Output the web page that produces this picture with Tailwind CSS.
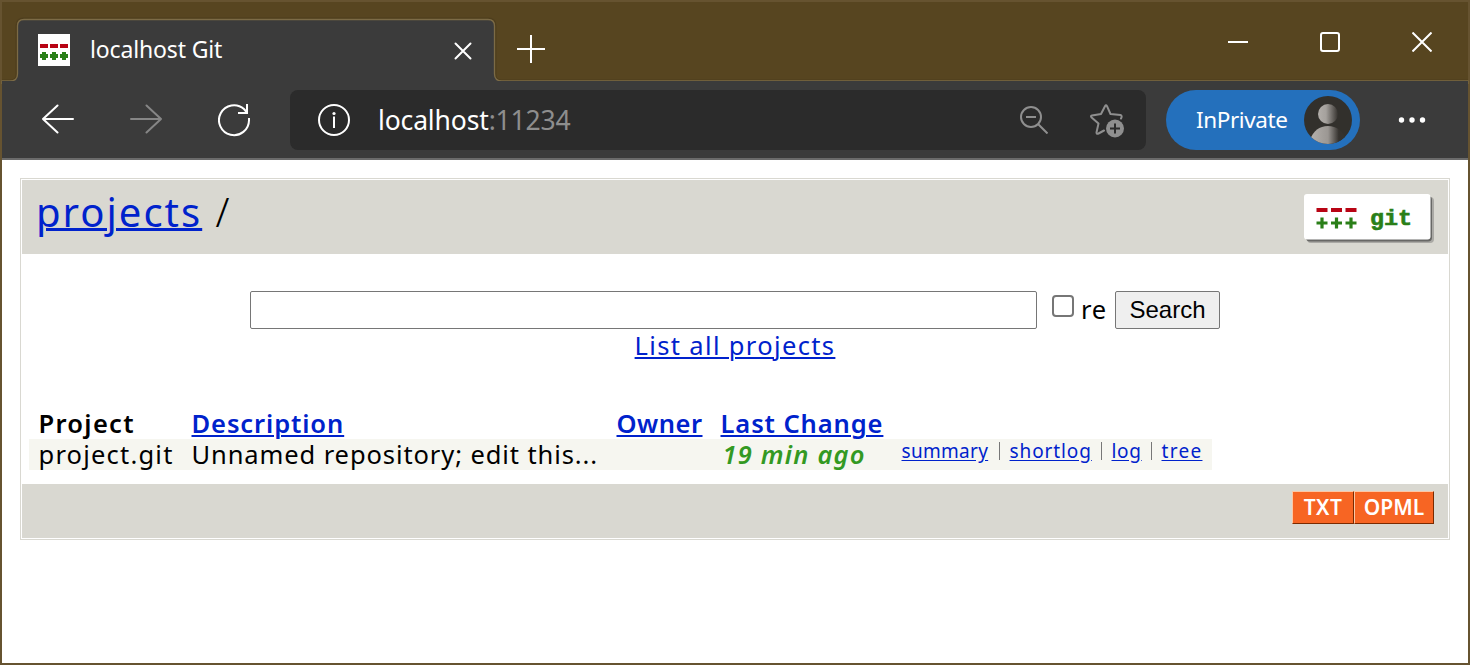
<!DOCTYPE html>
<html lang="en">
<head>
<meta charset="utf-8">
<title>localhost Git</title>
<script src="https://cdn.jsdelivr.net/npm/@tailwindcss/browser@4"></script>
</head>
<body class="w-[1470px] h-[665px] overflow-hidden bg-white font-['Noto_Sans',sans-serif] text-black">
<div class="relative flex h-[665px] w-[1470px] flex-col border-2 border-[#665330] bg-white">

  <!-- Title bar -->
  <header class="relative flex h-[79px] shrink-0 bg-[#574520] text-white">
    <svg class="absolute -left-[2px] -top-[2px]" width="1470" height="84" fill="none">
      <path d="M2 81.500H10Q17.500 81.500 17.500 75V26Q17.500 19.500 24 19.500H488Q494.500 19.500 494.500 26V75Q494.500 81.500 502 81.500H1468" stroke="#45371a" stroke-width="4" opacity=".5"/>
      <path d="M2 81H10Q17.500 81 17.500 74V26Q17.500 19.500 24 19.500H488Q494.500 19.500 494.500 26V74Q494.500 81 502 81H1468V84H2Z" fill="#3b3b3b" stroke="#7c6b46" stroke-width="1.300"/>
    </svg>
    <div class="relative mt-[17px] flex h-[62px] w-[493px] items-center pl-[36px]">
      <svg width="32" height="32" shape-rendering="crispEdges">
        <path fill="#fff" d="M0 0h32v32H0z"/>
        <path fill="#b80414" d="M2 10h8v4H2zM12 10h8v4h-8zM22 10h8v4h-8z"/>
        <path fill="#2a7f18" d="M4 18h4v2h2v4H8v2H4v-2H2v-4h2zM14 18h4v2h2v4h-2v2h-4v-2h-2v-4h2zM24 18h4v2h2v4h-2v2h-4v-2h-2v-4h2z"/>
      </svg>
      <span class="-mt-[2px] ml-[20px] w-[364px] text-[23px] tracking-[-0.15px]">localhost Git</span>
      <svg class="mt-[2px] shrink-0" width="18" height="18" stroke="#fff" stroke-width="2" stroke-linecap="round"><path d="M1.500 1.500 16.500 16.500M16.500 1.500 1.500 16.500"/></svg>
    </div>
    <svg class="relative ml-[22px] mt-[33px]" width="28" height="28" stroke="#fff" stroke-width="2"><path d="M0 14H28M14 0V28"/></svg>
    <div class="ml-auto mr-[36px] mt-[30px] flex gap-[72px]">
      <svg width="20" height="20" stroke="#fff" stroke-width="2"><path d="M0 10H20"/></svg>
      <svg width="20" height="20" fill="none" stroke="#fff" stroke-width="2"><rect x="1" y="1" width="18" height="18" rx="2"/></svg>
      <svg width="20" height="20" stroke="#fff" stroke-width="2"><path d="M.5.5 19.500 19.500M19.500.5.5 19.500"/></svg>
    </div>
  </header>

  <!-- Toolbar -->
  <nav class="relative flex h-[79px] shrink-0 items-start border-b-2 border-[#6b6b6b] bg-[#3b3b3b] pt-[9px] text-white">
    <svg class="ml-[40px] mt-[14px]" width="32" height="30" fill="none" stroke="#fff" stroke-width="2" stroke-linecap="round" stroke-linejoin="round"><path d="M15.500 1.500 1 15 15.500 28.500M1 15H31"/></svg>
    <svg class="ml-[56px] mt-[14px]" width="32" height="30" fill="none" stroke="#868686" stroke-width="2" stroke-linecap="round" stroke-linejoin="round"><path d="M16.500 1.500 31 15 16.500 28.500M31 15H1"/></svg>
    <svg class="ml-[56px] mt-[14px]" width="32" height="33" fill="none" stroke="#fff" stroke-width="2"><path d="M31 14V16A15 15 0 1 1 26 5L29 8.500M29 0V9H20"/></svg>
    <div class="ml-[40px] flex h-[60px] w-[856px] items-center rounded-lg bg-[#2b2b2b] pl-[28px]">
      <svg width="32" height="32" fill="none" stroke="#fff" stroke-width="2"><circle cx="16" cy="16" r="15"/><path d="M16 12.500V24"/><circle cx="16" cy="9.500" r="1.600" fill="#fff" stroke="none"/></svg>
      <span class="mt-[1px] ml-[28px] w-[642px] text-[26.500px] tracking-[-0.15px]">localhost<span class="text-[#8e8e8e]">:11234</span></span>
      <svg width="28" height="28" fill="none" stroke="#8f8f8f" stroke-width="2"><circle cx="11" cy="11" r="10"/><path d="M6 11H16M18 18 27.500 27.500"/></svg>
      <svg class="ml-[42px] mt-[2px]" width="36" height="34" fill="none" stroke="#8f8f8f" stroke-width="2" stroke-linejoin="round" stroke-linecap="round">
        <path d="M31 14.500Q32.500 11.500 30.500 11L20.500 10 17 2.200Q16 .5 15 2.200L11 10 2 11.500Q.2 12 1.600 13.500L8.500 19.500 6.500 28.500Q6.500 30.500 8.500 29.500L14 26.500"/>
        <circle cx="25" cy="24.500" r="9" fill="#8f8f8f" stroke="none"/><path stroke-linecap="butt" d="M20 24.500H30M25 19.500V29.500" stroke="#2b2b2b"/>
      </svg>
    </div>
    <div class="ml-[20px] flex h-[60px] w-[194px] items-center rounded-full bg-[#2470bc] pl-[30px]">
      <span class="-mt-[1px] w-[108px] text-[22.500px] tracking-[-0.4px]">InPrivate</span>
      <svg width="48" height="48">
        <defs>
          <clipPath id="disc"><circle cx="24" cy="24" r="24"/></clipPath>
          <linearGradient id="shade"><stop stop-color="#b2aeaa"/><stop offset=".4" stop-color="#a5a19d"/><stop offset="1" stop-color="#35322e"/></linearGradient>
          <linearGradient id="body"><stop stop-color="#b5b1ad"/><stop offset=".5" stop-color="#9b9793"/><stop offset=".8" stop-color="#35322e"/></linearGradient>
        </defs>
        <circle cx="24" cy="24" r="24" fill="#32302c"/>
        <circle cx="24" cy="18" r="10" fill="url(#shade)"/>
        <path clip-path="url(#disc)" fill="url(#body)" d="M6 44Q11 30 24 30Q37 30 42 44V48H6Z"/>
      </svg>
    </div>
    <svg class="ml-[38px] mt-[27px]" width="28" height="6" fill="#fff"><circle cx="3.500" cy="3" r="2.700"/><circle cx="14" cy="3" r="2.700"/><circle cx="24.500" cy="3" r="2.700"/></svg>
  </nav>

  <!-- Gitweb page -->
  <main class="mx-[18px] mt-[18px] flex h-[362px] flex-col border border-[#d9d8d1] p-px">
    <div class="flex h-[74px] shrink-0 justify-between bg-[#d9d8d1] pl-[14px] pr-[14px]">
      <h1 class="mt-[2px] text-[40px] leading-[60px] tracking-[2px]"><a class="text-[#0022cc] underline decoration-[3px] underline-offset-[1px]">projects</a><span class="ml-[1px] font-light"> /</span></h1>
      <svg class="mt-[14px]" width="130" height="49">
        <rect x="3" y="3" width="127" height="46" rx="4" fill="#aaa9a5"/>
        <rect x="2" y="2" width="126" height="45.500" rx="4" fill="#686866"/>
        <rect width="126.500" height="45.500" rx="3" fill="#fff"/>
        <path fill="#b80414" d="M12.500 14h11v4h-11zM27 14h11v4H27zM41.500 14h11v4h-11z"/>
        <path stroke="#2a7f18" stroke-width="3.200" d="M12.500 29h11M18 23.500v11M27 29h11M32.500 23.500v11M41.500 29h11M47 23.500v11"/>
        <text x="66" y="31" fill="#2a7f18" stroke="#2a7f18" stroke-width=".6" font-weight="700" font-size="22" textLength="42" lengthAdjust="spacingAndGlyphs" style="font-family:'Liberation Mono'">git</text>
      </svg>
    </div>

    <div class="mt-[37px] flex h-[38px] items-start pl-[228px]">
      <div class="h-[38px] w-[787px] rounded-[2px] border border-[#767676] bg-white"></div>
      <div class="ml-[15px] mt-[4px] h-[22px] w-[22px] rounded-[4px] border-2 border-[#767676] bg-white"></div>
      <span class="-mt-[1px] ml-[7px] w-[34px] text-[25.500px] leading-[38px] tracking-[0.8px]">re</span>
      <div class="flex h-[38px] w-[105px] items-center justify-center rounded-[2px] border border-[#767676] bg-[#efefef] font-['Liberation_Sans',sans-serif] text-[24px]">Search</div>
    </div>
    <div class="-mt-px h-[34px] text-center text-[25.500px] leading-[34px] tracking-[1.35px]"><a class="text-[#0022cc] underline decoration-2 underline-offset-[2px]">List all projects</a></div>

    <div class="mt-[46px] flex h-[31px] text-[25.500px] leading-[30px] pl-[16.500px] font-semibold tracking-[1px] text-[#0022cc] whitespace-nowrap">
      <span class="w-[153px] tracking-[1.3px] text-black">Project</span>
      <span class="w-[425px]"><a class="tracking-[0.9px] underline decoration-2 underline-offset-[2px]">Description</a></span>
      <span class="w-[104px]"><a class="tracking-[0.5px] underline decoration-2 underline-offset-[2px]">Owner</a></span>
      <span><a class="tracking-[0.9px] underline decoration-2 underline-offset-[2px]">Last Change</a></span>
    </div>
    <div class="ml-[7px] flex h-[31px] w-[1183px] items-start bg-[#f6f6f0] pl-[9.500px] text-[25.500px] leading-[30px] tracking-[0.9px] whitespace-nowrap">
      <span class="w-[153px] tracking-[1.2px]">project.git</span>
      <span class="w-[531px]">Unnamed repository; edit this...</span>
      <span class="w-[179px] font-semibold italic tracking-[1.2px] text-[#339922]">19 min ago</span>
      <span class="flex text-[19px] leading-[25px] tracking-[0.5px] text-[#0022cc]">
        <a class="w-[88px] tracking-[0.3px] underline underline-offset-[2px]">summary</a>
        <span class="mt-[3px] h-[18px] w-[20px] pl-[9px]"><span class="block h-full w-px bg-[#777]"></span></span>
        <a class="w-[82px] tracking-[0.9px] underline underline-offset-[2px]">shortlog</a>
        <span class="mt-[3px] h-[18px] w-[20px] pl-[9px]"><span class="block h-full w-px bg-[#777]"></span></span>
        <a class="w-[30px] tracking-[0.7px] underline underline-offset-[2px]">log</a>
        <span class="mt-[3px] h-[18px] w-[20px] pl-[9px]"><span class="block h-full w-px bg-[#777]"></span></span>
        <a class="tracking-[1.3px] underline underline-offset-[2px]">tree</a>
      </span>
    </div>

    <div class="mt-auto flex h-[54px] justify-end bg-[#d9d8d1] pr-[14px] pt-[7px] text-[21px] font-semibold leading-[31px] text-white">
      <a class="h-[33px] w-[62px] border border-b-[#7a2a00] border-l-[#fcc7a5] border-r-[#7a2a00] border-t-[#fcc7a5] bg-[#f76523] text-center tracking-[0.4px]">TXT</a>
      <a class="h-[33px] w-[80px] border border-b-[#7a2a00] border-l-[#fcc7a5] border-r-[#7a2a00] border-t-[#fcc7a5] bg-[#f76523] text-center">OPML</a>
    </div>
  </main>
</div>
</body>
</html>
